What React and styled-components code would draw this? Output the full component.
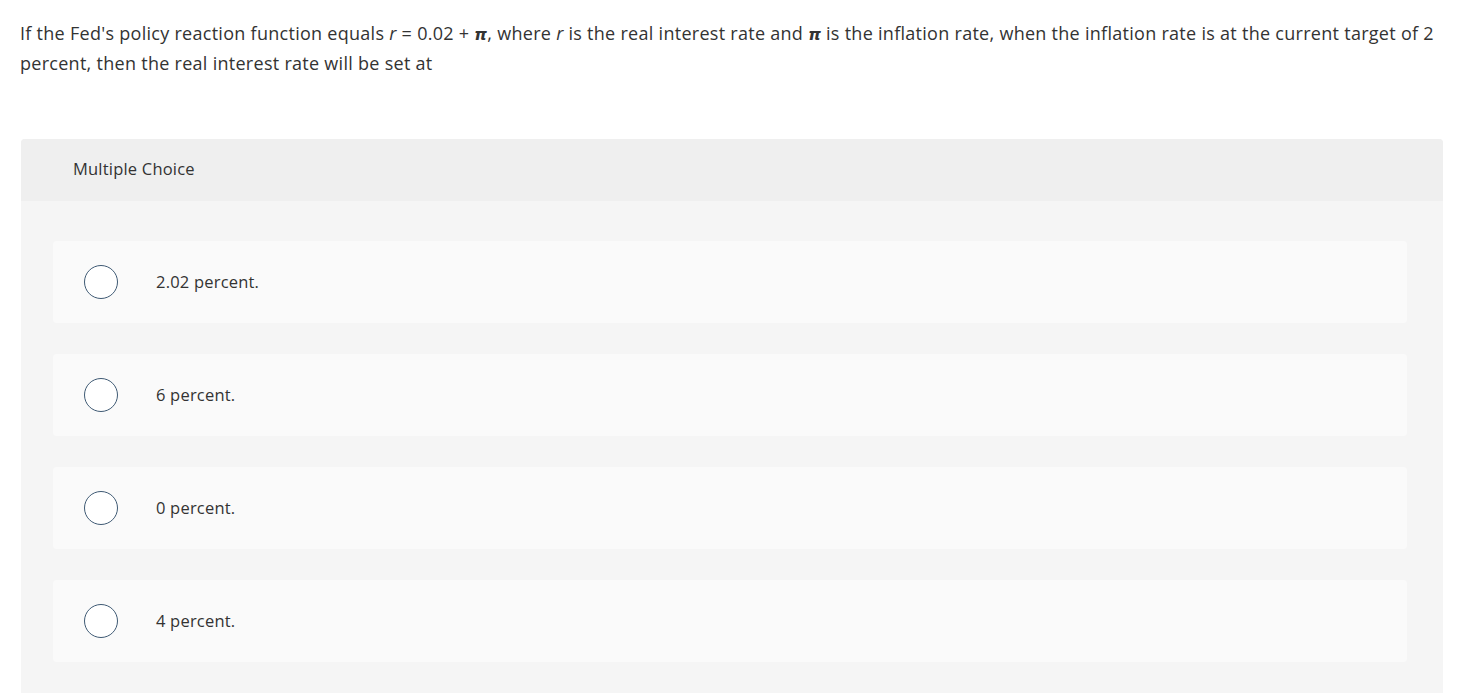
import styled, { createGlobalStyle } from "styled-components";

const GlobalStyle = createGlobalStyle`
  body {
    margin: 0;
    background: #fff;
    font-family: "Open Sans", Lato, sans-serif;
    color: #333;
  }
`;

const Page = styled.div`
  padding: 19px 20px 0 20px;
`;

const Question = styled.p`
  margin: 0 0 61px 0;
  font-size: 18px;
  line-height: 29px;
  letter-spacing: 0.28px;
  color: #333;
`;

const Var = styled.i`
  font-style: italic;
`;

const Pi = styled.i`
  font-family: "DejaVu Sans", sans-serif;
  font-style: italic;
  font-weight: bold;
  font-size: 16px;
`;

const Panel = styled.section`
  margin-left: 1px;
  width: 1422px;
  border-radius: 4px 4px 0 0;
  background: #f5f5f5;
  overflow: hidden;
`;

const PanelHeader = styled.div`
  height: 62px;
  box-sizing: border-box;
  background: #efefef;
  display: flex;
  align-items: center;
  padding: 0 0 4px 52px;
  font-size: 16.5px;
  letter-spacing: 0.2px;
  color: #333;
`;

const Choices = styled.div`
  display: flex;
  flex-direction: column;
  gap: 31px;
  padding: 40px 36px 40px 32px;
`;

const Choice = styled.label`
  display: flex;
  align-items: center;
  height: 82px;
  background: #fafafa;
  border-radius: 4px;
  padding-left: 31px;
  font-size: 16.5px;
  letter-spacing: 0.2px;
  color: #333;
  cursor: pointer;
`;

const Radio = styled.span`
  width: 32px;
  height: 32px;
  border: 1.5px solid #3f5a74;
  border-radius: 50%;
  background: #fff;
  flex-shrink: 0;
  margin-right: 38px;
`;

const ChoiceText = styled.span`
  padding-bottom: 2px;
`;

const options = ["2.02 percent.", "6 percent.", "0 percent.", "4 percent."];

export default function App() {
  return (
    <>
      <GlobalStyle />
      <Page>
        <Question>
          If the Fed's policy reaction function equals <Var>r</Var> = 0.02 + <Pi>π</Pi>, where{" "}
          <Var>r</Var> is the real interest rate and <Pi>π</Pi> is the inflation rate, when the
          inflation rate is at the current target of 2 percent, then the real interest rate will
          be set at
        </Question>
        <Panel>
          <PanelHeader>Multiple Choice</PanelHeader>
          <Choices>
            {options.map((o) => (
              <Choice key={o}>
                <Radio />
                <ChoiceText>{o}</ChoiceText>
              </Choice>
            ))}
          </Choices>
        </Panel>
      </Page>
    </>
  );
}
